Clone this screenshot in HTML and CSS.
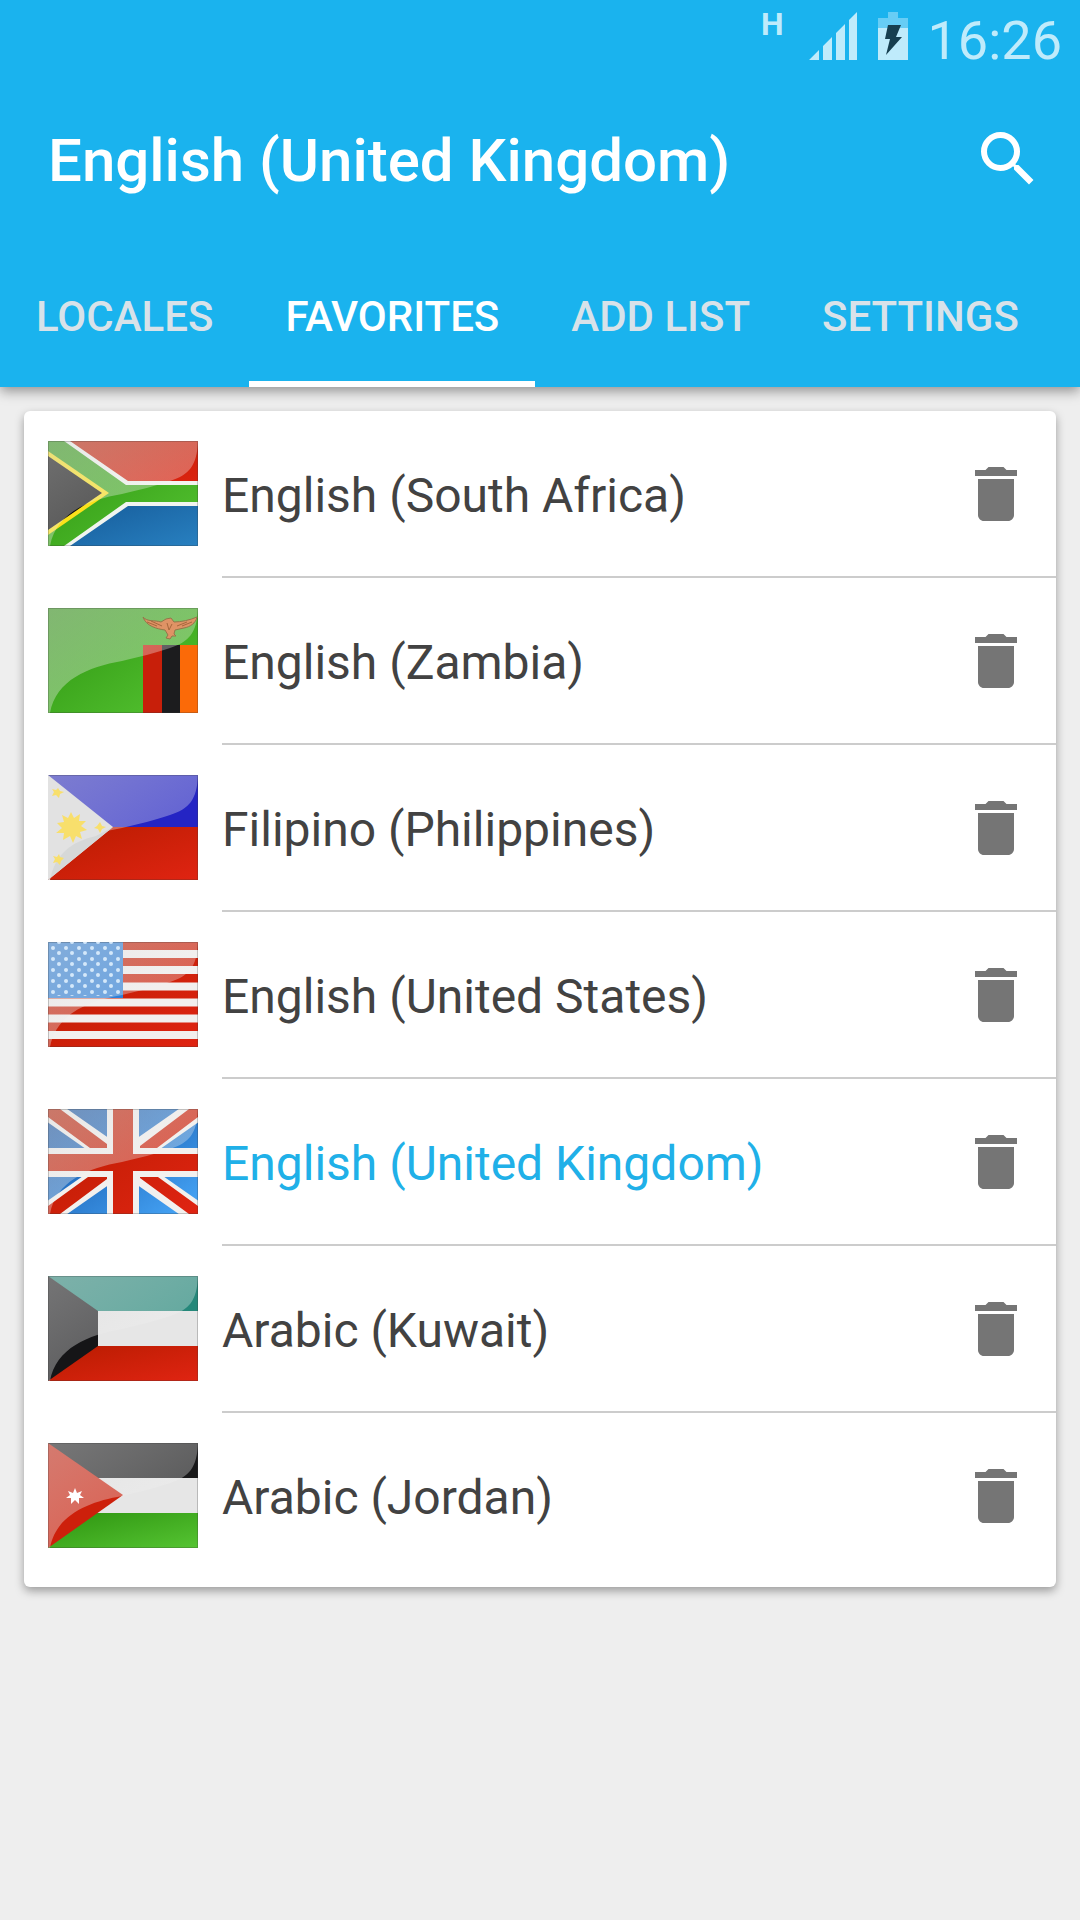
FILE: index.html
```html
<!DOCTYPE html>
<html lang="en">
<head>
    <meta charset="UTF-8">
    <meta name="viewport" content="width=device-width, initial-scale=1.0">
    <title>Locale Favorites</title>
    <link rel="stylesheet" href="styles.css">
</head>
<body>
    <header class="app-bar">
        <div class="status-bar">
            <span class="network">H</span>
            <svg class="signal" viewBox="0 0 48 48" aria-hidden="true">
                <path d="M0 48L10 38V48zM14 48V34L23 25V48zM27 48V21L36 12V48zM40 48V8L48 0V48z"/>
            </svg>
            <svg class="battery" viewBox="0 0 30 48" aria-hidden="true">
                <path d="M10 0H20V6H30V16H0V6H10z" fill="#67cdf5"/>
                <path d="M0 16H30V48H0z" fill="#bfebfb"/>
                <path d="M10 13H23L18 25H24L8 43L12 27H7z" fill="#173f50"/>
            </svg>
            <span class="clock">16:26</span>
        </div>

        <div class="toolbar">
            <h1 class="title">English (United Kingdom)</h1>
            <button class="icon-button" type="button" aria-label="Search">
                <svg class="icon" viewBox="0 0 24 24">
                    <defs>
                        <linearGradient id="shine" x1="0" y1="0" x2="1" y2="1">
                            <stop offset="0" stop-color="#dcdcdc" stop-opacity=".48"/>
                            <stop offset="1" stop-color="#fff" stop-opacity=".22"/>
                        </linearGradient>
                        <linearGradient id="red" x1="0" y1="0" x2="1" y2="1">
                            <stop offset="0" stop-color="#b81c00"/>
                            <stop offset="1" stop-color="#e02412"/>
                        </linearGradient>
                        <linearGradient id="green" x1="0" y1="0" x2="1" y2="1">
                            <stop offset="0" stop-color="#2e9410"/>
                            <stop offset="1" stop-color="#55c432"/>
                        </linearGradient>
                        <linearGradient id="blue" x1="0" y1="0" x2="1" y2="1">
                            <stop offset="0" stop-color="#0d4a9c"/>
                            <stop offset="1" stop-color="#48a8fa"/>
                        </linearGradient>
                        <linearGradient id="navy" x1="0" y1="0" x2="1" y2="1">
                            <stop offset="0" stop-color="#125492"/>
                            <stop offset="1" stop-color="#2880c0"/>
                        </linearGradient>
                        <pattern id="stars" width="13" height="11" patternUnits="userSpaceOnUse">
                            <circle cx="5" cy="6" r="2" fill="#d4e8fa"/>
                            <circle cx="11" cy="11" r="2" fill="#d4e8fa"/>
                            <circle cx="11" cy="0" r="2" fill="#d4e8fa"/>
                        </pattern>
                        <!-- glossy highlight shared by all flags -->
                        <g id="gloss">
                            <path d="M0 0H150C149 25 141 34 122 40C108 45 90 49 74 53C40 59 8 72 2 105H0z" fill="url(#shine)"/>
                            <path d="M.5 .5H149.5V104.5H.5z" fill="none" stroke="#333" stroke-opacity=".25"/>
                        </g>
                        <symbol id="trash" viewBox="0 0 24 24">
                            <path d="M6 19c0 1.100.9 2 2 2h8c1.100 0 2-.9 2-2V7H6v12zM19 4h-3.500l-1-1h-5l-1 1H5v2h14V4z"/>
                        </symbol>
                    </defs>
                    <path d="M15.500 14h-.790l-.280-.270A6.471 6.471 0 0 0 16 9.500 6.500 6.500 0 1 0 9.500 16c1.610 0 3.090-.590 4.230-1.570l.270.280v.790l5 4.990L20.490 19l-4.990-5zm-6 0C7.010 14 5 11.990 5 9.500S7.010 5 9.500 5 14 7.010 14 9.500 11.990 14 9.500 14z"/>
                </svg>
            </button>
        </div>

        <nav class="tabs">
            <a class="tab" href="#locales">LOCALES</a>
            <a class="tab active" href="#favorites">FAVORITES</a>
            <a class="tab" href="#add">ADD LIST</a>
            <a class="tab" href="#settings">SETTINGS</a>
        </nav>
    </header>

    <main class="content">
        <ul class="card">
            <li class="row">
                <svg class="flag" viewBox="0 0 150 105" aria-hidden="true">
                    <path d="M0 0H150V53H0z" fill="url(#red)"/>
                    <path d="M0 52H150V105H0z" fill="url(#navy)"/>
                    <path d="M0 0H22L80 40H150V65H80L22 105H0z" fill="#f1f4f0"/>
                    <path d="M0 0H16L78 44H150V61H78L16 105H0z" fill="url(#green)"/>
                    <path d="M0 10L61 52L0 94z" fill="#fbe11b"/>
                    <path d="M0 15L54 52L0 89z" fill="#0c0c0c"/>
                    <use href="#gloss"/>
                </svg>
                <div class="row-body">
                    <span class="name">English (South Africa)</span>
                    <button class="icon-button delete" type="button" aria-label="Delete English (South Africa)"><svg class="icon"><use href="#trash"/></svg></button>
                </div>
            </li>
            <li class="row">
                <svg class="flag" viewBox="0 0 150 105" aria-hidden="true">
                    <path d="M0 0H150V105H0z" fill="url(#green)"/>
                    <path d="M95 37H114V105H95z" fill="#c81f0a"/>
                    <path d="M114 37H132V105H114z" fill="#1c1c1e"/>
                    <path d="M132 37H150V105H132z" fill="#fb6a08"/>
                    <use href="#gloss"/>
                    <path d="M95 9C99 14 107 12 113 14L118 11L123 10L126 14C133 14 142 12 149 9C148 15 142 19 136 20L127 22L126 26L128 28L124 28L122 31L118 30L120 27L117 22C109 21 98 18 95 9z" fill="#df9365" stroke="#94764a"/>
                    <path d="M99 14L109 18M103 13L114 18M144 14L134 18M139 14L129 18M119 15L121 22L124 16" fill="none" stroke="#a6673c"/>
                </svg>
                <div class="row-body">
                    <span class="name">English (Zambia)</span>
                    <button class="icon-button delete" type="button" aria-label="Delete English (Zambia)"><svg class="icon"><use href="#trash"/></svg></button>
                </div>
            </li>
            <li class="row">
                <svg class="flag" viewBox="0 0 150 105" aria-hidden="true">
                    <path d="M0 0H150V52H0z" fill="#2424c4"/>
                    <path d="M0 52H150V105H0z" fill="url(#red)"/>
                    <use href="#gloss"/>
                    <path d="M0 0L65 52L0 105z" fill="#e2e2e2"/>
                    <path d="M2 105C7 80 22 67 48 61L65 52L0 105z" fill="#d6d8d8"/>
                    <g fill="#f8df6c">
                        <path d="M23 37L26 43L32 39L31 46L38 46L33 51L39 55L32 57L34 64L28 61L25 68L22 61L15 65L16 58L8 58L14 53L9 48L16 47L14 40L20 43z"/>
                        <path d="M10 13L12 16L16 17L12 19L11 23L8 20L4 21L6 17L4 14L8 15z"/>
                        <path d="M52 47L54 51L58 52L54 54L52 58L50 54L46 53L49 51z"/>
                        <path d="M11 79L12 82L16 83L13 86L12 90L9 87L5 88L7 84L5 81L9 82z"/>
                    </g>
                </svg>
                <div class="row-body">
                    <span class="name">Filipino (Philippines)</span>
                    <button class="icon-button delete" type="button" aria-label="Delete Filipino (Philippines)"><svg class="icon"><use href="#trash"/></svg></button>
                </div>
            </li>
            <li class="row">
                <svg class="flag" viewBox="0 0 150 105" aria-hidden="true">
                    <path d="M0 0H150V105H0z" fill="url(#red)"/>
                    <path d="M0 12H150M0 28H150M0 44.500H150M0 60.500H150M0 76.500H150M0 93H150" stroke="#f2efee" stroke-width="8"/>
                    <path d="M0 0H75V56H0z" fill="#2f80d8"/>
                    <use href="#gloss"/>
                    <path d="M0 0H73V54H0z" fill="url(#stars)"/>
                </svg>
                <div class="row-body">
                    <span class="name">English (United States)</span>
                    <button class="icon-button delete" type="button" aria-label="Delete English (United States)"><svg class="icon"><use href="#trash"/></svg></button>
                </div>
            </li>
            <li class="row">
                <svg class="flag" viewBox="0 0 150 105" aria-hidden="true">
                    <path d="M0 0H150V105H0z" fill="url(#blue)"/>
                    <path d="M0 0L150 105M150 0L0 105" stroke="#f2f0ee" stroke-width="22"/>
                    <path d="M0 0H12L59 35V39H42L0 8zM150 0V8L109 39H92V37L141 0zM0 105V97L40 68H59V70L12 105zM150 105H141L92 69V68H110L150 97z" fill="url(#red)"/>
                    <path d="M59 0H91V39H150V68H91V105H59V68H0V39H59z" fill="#f2f0ee"/>
                    <path d="M65 0H85V45H150V62H85V105H65V62H0V45H65z" fill="url(#red)"/>
                    <use href="#gloss"/>
                </svg>
                <div class="row-body">
                    <span class="name selected">English (United Kingdom)</span>
                    <button class="icon-button delete" type="button" aria-label="Delete English (United Kingdom)"><svg class="icon"><use href="#trash"/></svg></button>
                </div>
            </li>
            <li class="row">
                <svg class="flag" viewBox="0 0 150 105" aria-hidden="true">
                    <path d="M0 0H150V35H0z" fill="#25887a"/>
                    <path d="M0 35H150V70H0z" fill="#e6e6e6"/>
                    <path d="M0 70H150V105H0z" fill="url(#red)"/>
                    <path d="M0 0L50 35V70L0 105z" fill="#151517"/>
                    <use href="#gloss"/>
                </svg>
                <div class="row-body">
                    <span class="name">Arabic (Kuwait)</span>
                    <button class="icon-button delete" type="button" aria-label="Delete Arabic (Kuwait)"><svg class="icon"><use href="#trash"/></svg></button>
                </div>
            </li>
            <li class="row">
                <svg class="flag" viewBox="0 0 150 105" aria-hidden="true">
                    <path d="M0 0H150V35H0z" fill="#19191a"/>
                    <path d="M0 35H150V70H0z" fill="#e6e6e6"/>
                    <path d="M0 70H150V105H0z" fill="url(#green)"/>
                    <path d="M0 0L75 52L0 105z" fill="#cd200b"/>
                    <use href="#gloss"/>
                    <path d="M27 45L29 50L34 48L32 52L36 55L31 55L31 61L27 57L23 61L23 55L18 55L22 52L20 48L25 50z" fill="#fff"/>
                </svg>
                <div class="row-body">
                    <span class="name">Arabic (Jordan)</span>
                    <button class="icon-button delete" type="button" aria-label="Delete Arabic (Jordan)"><svg class="icon"><use href="#trash"/></svg></button>
                </div>
            </li>
        </ul>
    </main>
</body>
</html>
```

FILE: styles.css
```css
* {
    box-sizing: border-box;
}

body {
    margin: 0;
    font-family: Roboto, "Noto Sans", sans-serif;
    background-color: #eeeeee;
    color: #424242;
}

.app-bar {
    position: relative;
    background-color: #1ab3ee;
    color: white;
    box-shadow: 0 4px 12px rgba(0, 0, 0, 0.4);
}

.status-bar {
    display: flex;
    justify-content: flex-end;
    height: 75px;
    padding: 12px 18px 0 0;
    color: #bfebfb;
}

.network {
    margin-right: 25px;
    font-size: 32px;
    line-height: 24px;
    font-weight: 700;
}

.signal {
    width: 48px;
    height: 48px;
    margin-right: 21px;
    fill: #bfebfb;
}

.battery {
    width: 30px;
    height: 48px;
    margin-right: 20px;
}

.clock {
    font-size: 54px;
    line-height: 58px;
    font-weight: 400;
}

.toolbar {
    display: flex;
    align-items: center;
    justify-content: space-between;
    height: 168px;
    padding: 0 36px 0 48px;
}

.title {
    margin: 0;
    padding-top: 4px;
    font-size: 60px;
    line-height: 72px;
    font-weight: 500;
}

.icon-button {
    flex: none;
    padding: 0;
    border: none;
    background: none;
    color: white;
    cursor: pointer;
}

.icon {
    display: block;
    width: 72px;
    height: 72px;
    fill: currentColor;
}

.tabs {
    display: flex;
}

.tab {
    height: 144px;
    padding: 2px 36px 0;
    border-bottom: 6px solid transparent;
    font-size: 42px;
    line-height: 144px;
    font-weight: 500;
    white-space: nowrap;
    text-decoration: none;
    color: #d8e2e9;
}

.tab.active {
    border-bottom-color: white;
    color: white;
}

.content {
    padding: 24px;
}

.card {
    margin: 0;
    padding: 0 0 7px;
    list-style: none;
    border-radius: 6px;
    background-color: white;
    box-shadow: 0 4px 10px rgba(0, 0, 0, 0.35);
}

.row {
    display: flex;
    padding-left: 24px;
}

.flag {
    flex: none;
    width: 150px;
    height: 105px;
    margin: 30px 24px 32px 0;
}

.row-body {
    display: flex;
    flex: 1;
    align-items: center;
    justify-content: space-between;
    padding-right: 24px;
    border-bottom: 2px solid #cccccc;
}

.row:last-child .row-body {
    border-bottom-color: transparent;
}

.name {
    padding-top: 4px;
    font-size: 48px;
    line-height: 56px;
}

.name.selected {
    color: #20b0e8;
}

.delete {
    color: #757575;
}
```
